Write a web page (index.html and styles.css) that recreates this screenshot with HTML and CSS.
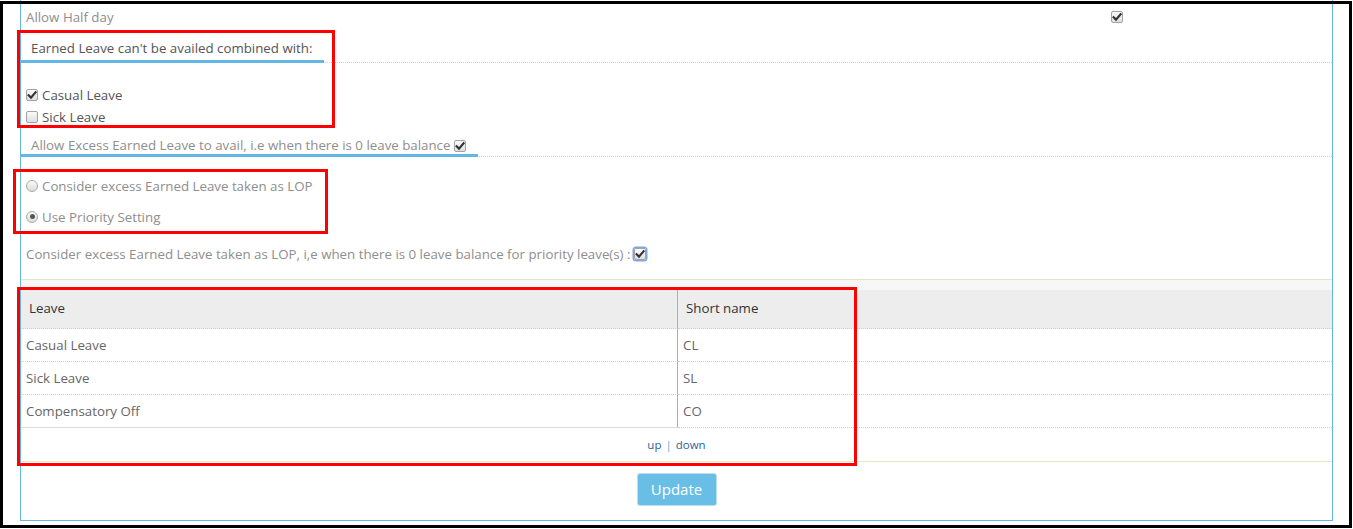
FILE: index.html
```html
<!DOCTYPE html>
<html>
<head>
<meta charset="utf-8">
<title>Earned Leave settings</title>
<link rel="stylesheet" href="styles.css">
</head>
<body>
<div class="panel">
  <div class="row-half">
    <div class="lbl muted">Allow Half day</div>
    <div class="val"><span class="cb"><svg viewBox="0 0 10 10"><path d="M1.6 5.2 L4 7.6 L8.6 2.2"/></svg></span></div>
  </div>

  <div class="section-head">
    <span class="tab">Earned Leave can't be availed combined with:</span>
  </div>
  <div class="combo-list">
    <label class="opt"><span class="cb"><svg viewBox="0 0 10 10"><path d="M1.6 5.2 L4 7.6 L8.6 2.2"/></svg></span>Casual Leave</label>
    <label class="opt"><span class="cb"></span>Sick Leave</label>
  </div>

  <div class="section-head head2">
    <span class="tab tab2">Allow Excess Earned Leave to avail, i.e when there is 0 leave balance<span class="cb inl"><svg viewBox="0 0 10 10"><path d="M1.6 5.2 L4 7.6 L8.6 2.2"/></svg></span></span>
  </div>
  <div class="radio-list">
    <label class="ropt"><span class="rb"></span>Consider excess Earned Leave taken as LOP</label>
    <label class="ropt"><span class="rb on"></span>Use Priority Setting</label>
  </div>

  <div class="priority-row">Consider excess Earned Leave taken as LOP, i,e when there is 0 leave balance for priority leave(s) :<span class="cb focus"><svg viewBox="0 0 10 10"><path d="M1.6 5.2 L4 7.6 L8.6 2.2"/></svg></span></div>

  <div class="table-wrap">
    <table class="prio">
      <colgroup><col class="col-leave"><col></colgroup>
      <thead>
        <tr><th class="c1">Leave</th><th class="c2">Short name</th></tr>
      </thead>
      <tbody>
        <tr><td class="c1">Casual Leave</td><td class="c2">CL</td></tr>
        <tr><td class="c1">Sick Leave</td><td class="c2">SL</td></tr>
        <tr class="last"><td class="c1">Compensatory Off</td><td class="c2">CO</td></tr>
      </tbody>
      <tfoot>
        <tr><td colspan="2" class="updown"><a href="#">up</a><span class="sep">|</span><a href="#">down</a></td></tr>
      </tfoot>
    </table>
  </div>

  <div class="actions"><button class="btn" type="button">Update</button></div>
</div>

<div class="mark mark1"></div>
<div class="mark mark2"></div>
<div class="mark mark3"></div>
<div class="frame"></div>
</body>
</html>
```
FILE: styles.css
```css
* { box-sizing: border-box; }
html, body { margin: 0; background: #fff; }
body {
  position: relative;
  width: 1353px;
  height: 529px;
  overflow: hidden;
  font-family: "Open Sans", "Noto Sans", sans-serif;
  font-size: 13.3px;
  color: #555;
}

.panel {
  margin-left: 20px;
  width: 1313px;
  height: 521px;
  border: 1px solid #62b7e4;
  border-top: none;
  padding-top: 4px;
}

.muted { color: #8e8e8e; }

/* checkbox */
.cb {
  display: inline-flex;
  align-items: center;
  justify-content: center;
  width: 12px;
  height: 12px;
  border: 1px solid #a3a3a3;
  border-radius: 2px;
  background: linear-gradient(#fbfbfb, #dedede);
  flex: none;
}
.cb svg { width: 10px; height: 10px; }
.cb path { fill: none; stroke: #333; stroke-width: 2.1; stroke-linecap: square; }
.cb.focus { box-shadow: 0 0 0 1.5px #7aa8e6; margin-left: 4px; }
.cb.inl { margin-left: 4px; vertical-align: -1px; }

/* radio */
.rb {
  display: inline-flex;
  align-items: center;
  justify-content: center;
  width: 12px;
  height: 12px;
  border: 1px solid #aaa;
  border-radius: 50%;
  background: linear-gradient(#fafafa, #dcdcdc);
  flex: none;
  margin-right: 4px;
}
.rb.on::after {
  content: "";
  width: 5px;
  height: 5px;
  border-radius: 50%;
  background: #555;
}

.row-half {
  display: grid;
  grid-template-columns: 1085px 1fr;
  height: 26px;
  align-items: center;
}
.lbl { padding-left: 5px; }
.val { padding-left: 5px; display: flex; }

.section-head {
  display: flex;
  align-items: flex-end;
  height: 33px;
  border-bottom: 1px dotted #cfcfcf;
}
.tab {
  line-height: 20px;
  padding: 0 12px 2px 10px;
  border-bottom: 3px solid #62b7e4;
  margin-bottom: -1px;
  color: #555;
}
.head2 { height: 29px; }
.tab2 { line-height: 18px; padding: 0 12px 0 10px; color: #8e8e8e; }

.combo-list { padding-top: 21px; height: 65px; }
.opt {
  display: flex;
  align-items: center;
  height: 22px;
  padding-left: 5px;
  color: #555;
}
.opt .cb { margin-right: 4px; }

.radio-list { padding-top: 13px; height: 75px; }
.ropt {
  display: flex;
  align-items: center;
  height: 31px;
  padding-left: 5px;
  color: #8e8e8e;
}

.priority-row {
  display: flex;
  align-items: center;
  height: 47px;
  padding: 0 0 3px 5px;
  color: #8e8e8e;
}

.table-wrap {
  border-top: 1px solid #e0e8c4;
  border-bottom: 1px solid #e0e8c4;
  background: #f7f7f7;
  padding-top: 10px;
}
.prio {
  width: 100%;
  table-layout: fixed;
  border-collapse: separate;
  border-spacing: 0;
  background: #fff;
}
.col-leave { width: 657px; }
.prio th {
  height: 39px;
  background: #ededed;
  text-align: left;
  font-weight: normal;
  color: #333;
  padding: 0 8px 2px;
  border-bottom: 1px dotted #cfcfcf;
}
.prio td {
  height: 33px;
  padding: 0 5px;
  border-bottom: 1px dotted #cfcfcf;
  color: #666;
}
.prio .c1 { border-right: 1px solid #7bbde3; }
.prio tr.last td.c1 { border-bottom: 1px solid #dcdcdc; }
.prio td.updown {
  border-bottom: none;
  text-align: center;
  font-size: 11.5px;
  padding-top: 0;
}
.updown a { color: #2f5f99; text-decoration: none; }
.updown .sep { color: #5aa9dc; margin: 0 4px; }

.actions { text-align: center; padding-top: 11px; }
.btn {
  width: 80px;
  height: 33px;
  background: #69bee6;
  border: 1px solid #b9def0;
  border-radius: 3px;
  color: #fff;
  font-family: inherit;
  font-size: 15px;
  padding: 0 0 2px;
}

/* annotation overlays */
.mark {
  position: absolute;
  border: 3px solid #ff0000;
  pointer-events: none;
}
.mark1 { left: 17px; top: 30px; width: 318px; height: 98px; }
.mark2 { left: 13px; top: 169px; width: 315px; height: 65px; }
.mark3 { left: 17px; top: 287px; width: 840px; height: 179px; }

.frame {
  position: absolute;
  left: 0;
  top: 1px;
  width: 1352px;
  height: 527px;
  border: 3px solid #000;
  pointer-events: none;
}
```
